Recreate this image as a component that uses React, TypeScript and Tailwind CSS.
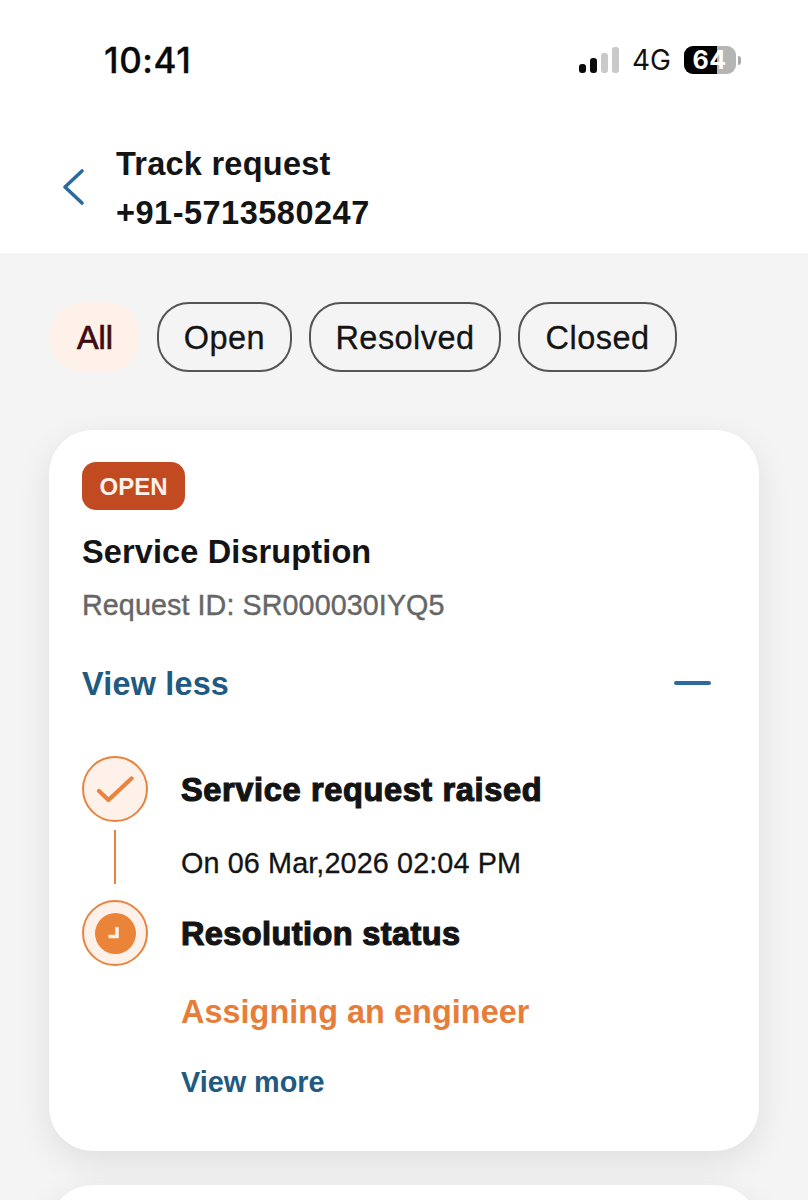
import React from "react";

const Chip = ({ label, width }: { label: string; width: string }) => (
  <div className={`h-[70px] pt-[3px] flex items-center justify-center rounded-[32px] border-2 border-[#555555] text-[32.5px] tracking-[0.45px] text-[#141414] [-webkit-text-stroke:0.3px_#141414] ${width}`}>
    {label}
  </div>
);

export default function App() {
  return (
    <div className="w-[808px] h-[1200px] overflow-hidden bg-[#f4f4f4] font-['Liberation_Sans',sans-serif]">
      <div className="h-[253px] bg-white relative">
        <div className="flex items-center justify-between pl-[104px] pr-[67px] pt-[38px]">
          <div className="font-['Inter',sans-serif] text-[35px] leading-[44px] font-medium text-[#0a0a0a] tracking-[0.6px] [-webkit-text-stroke:0.3px_#0a0a0a]">10:41</div>
          <div className="flex items-center">
            <svg width="42" height="28" viewBox="0 0 42 28" className="mr-[12px]">
              <rect x="1" y="18" width="7" height="9" rx="3" fill="#0a0a0a" />
              <rect x="12" y="12" width="7" height="15" rx="3" fill="#0a0a0a" />
              <rect x="23" y="7" width="7" height="20" rx="3" fill="#c9c9c9" />
              <rect x="34" y="1" width="7" height="26" rx="3" fill="#c9c9c9" />
            </svg>
            <span className="font-['Inter',sans-serif] text-[28px] leading-[32px] text-[#111] mr-[13px]">4G</span>
            <div className="relative w-[52px] h-[28px] rounded-[9px] overflow-hidden flex bg-[#b5b5b5]">
              <div className="w-[33px] h-full bg-black" />
              <div className="absolute inset-0 flex items-center justify-center pr-[1px] text-white font-['Inter',sans-serif] font-bold text-[25px] leading-none tracking-[0.5px]">64</div>
            </div>
            <div className="w-[3px] h-[9px] bg-[#a8a8a8] rounded-r-[3px] ml-[2px]" />
          </div>
        </div>
        <div className="flex items-center pl-[60px] pt-[58px]">
          <svg width="26" height="38" viewBox="0 0 26 38" fill="none" className="mr-[30px] mt-[-5px]">
            <path d="M22 3 L5 19 L22 35" stroke="#2a6a9e" strokeWidth="3.6" strokeLinecap="round" strokeLinejoin="round" />
          </svg>
          <div className="text-[32.5px] leading-[49px] font-bold text-[#141414]">
            <div className="tracking-[0.25px]">Track request</div>
            <div className="tracking-[0.5px]">+91-5713580247</div>
          </div>
        </div>
      </div>

      <div className="flex items-center gap-[17px] pl-[50px] pt-[49px]">
        <div className="h-[70px] w-[90px] pt-[3px] flex items-center justify-center rounded-[32px] bg-[#fdf1ea] text-[32.5px] text-[#3f0c10] [-webkit-text-stroke:0.7px_#3f0c10]">All</div>
        <Chip label="Open" width="w-[135px]" />
        <Chip label="Resolved" width="w-[192px]" />
        <Chip label="Closed" width="w-[159px]" />
      </div>

      <div className="ml-[49px] mt-[58px] w-[710px] h-[721px] rounded-[44px] bg-white shadow-[0_10px_34px_rgba(0,0,0,0.09)] pl-[33px] pt-[32px] pr-[47px]">
        <div className="w-[103px] h-[48px] pt-[2px] rounded-[14px] bg-[#c24a20] flex items-center justify-center text-[24px] font-bold text-[#fdf1ea]">OPEN</div>
        <div className="mt-[22px] text-[32.5px] leading-[40px] font-bold tracking-[0.12px] text-[#141414]">Service Disruption</div>
        <div className="mt-[16px] text-[28.7px] leading-[34px] tracking-[0.09px] text-[#666666] [-webkit-text-stroke:0.4px_#666666]">Request ID: SR000030IYQ5</div>
        <div className="mt-[42px] flex items-center justify-between">
          <span className="text-[32.4px] leading-[40px] font-bold tracking-[0.2px] text-[#215a80]">View less</span>
          <div className="w-[37px] h-[4px] rounded-full bg-[#2a6a9e] mb-[2px] mr-[1px]" />
        </div>

        <div className="mt-[52px] flex">
          <div className="w-[66px] shrink-0 flex flex-col items-center">
            <div className="w-[66px] h-[66px] rounded-full border-[2.5px] border-[#e8843f] bg-[#fdf1ea] flex items-center justify-center">
              <svg width="38" height="30" viewBox="0 0 38 30" fill="none">
                <path d="M3 17 L12.5 26 L35.5 4.5" stroke="#e8843f" strokeWidth="4.2" strokeLinecap="round" strokeLinejoin="round" />
              </svg>
            </div>
            <div className="w-[2px] h-[54px] bg-[#e8843f] mt-[8px]" />
            <div className="mt-[16px] w-[66px] h-[66px] rounded-full border-[2.5px] border-[#e8843f] bg-[#fdf1ea] flex items-center justify-center">
              <div className="w-[41px] h-[41px] rounded-full bg-[#ea8439] flex items-center justify-center">
                <svg width="41" height="41" viewBox="0 0 41 41" fill="none">
                  <path d="M22 14 V23.5 H13.5" stroke="#fdf1ea" strokeWidth="3.6" strokeLinejoin="miter" />
                </svg>
              </div>
            </div>
          </div>
          <div className="ml-[33px]">
            <div className="h-[66px] pt-[3px] flex items-center text-[32.5px] font-bold tracking-[0.65px] text-[#141414] [-webkit-text-stroke:1.2px_#141414]">Service request raised</div>
            <div className="mt-[24px] text-[28.8px] leading-[34px] tracking-[0.1px] text-[#141414] [-webkit-text-stroke:0.3px_#141414]">On 06 Mar,2026 02:04 PM</div>
            <div className="mt-[34px] text-[32.5px] leading-[40px] font-bold tracking-[0.4px] text-[#141414] [-webkit-text-stroke:1.2px_#141414]">Resolution status</div>
            <div className="mt-[38px] text-[32.4px] leading-[40px] font-bold tracking-[0.05px] text-[#e67e3a]">Assigning an engineer</div>
            <div className="mt-[32px] text-[28.8px] leading-[36px] font-bold text-[#215a80]">View more</div>
          </div>
        </div>
      </div>

      <div className="ml-[49px] mt-[34px] w-[710px] h-[200px] rounded-[44px] bg-white shadow-[0_10px_34px_rgba(0,0,0,0.09)]" />
    </div>
  );
}
